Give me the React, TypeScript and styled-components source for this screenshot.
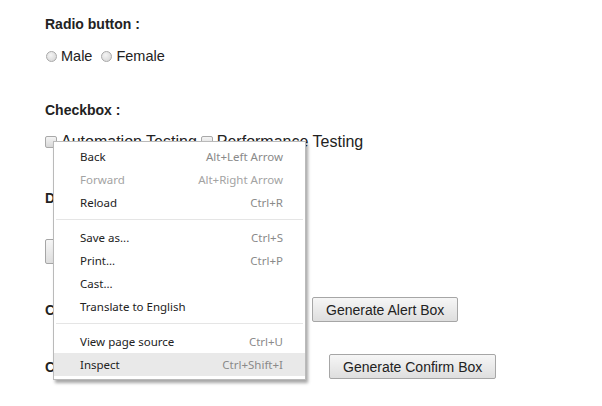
import React from "react";
import styled, { createGlobalStyle } from "styled-components";

const GlobalStyle = createGlobalStyle`
  html, body {
    margin: 0;
    padding: 0;
    background: #ffffff;
  }
  body {
    font-family: "Comic Sans MS", "Liberation Sans", Arial, sans-serif;
    color: #222;
  }
`;

type MenuItem = {
  label: string;
  shortcut?: string;
  disabled?: boolean;
  active?: boolean;
};

const menuGroups: MenuItem[][] = [
  [
    { label: "Back", shortcut: "Alt+Left Arrow" },
    { label: "Forward", shortcut: "Alt+Right Arrow", disabled: true },
    { label: "Reload", shortcut: "Ctrl+R" },
  ],
  [
    { label: "Save as...", shortcut: "Ctrl+S" },
    { label: "Print...", shortcut: "Ctrl+P" },
    { label: "Cast..." },
    { label: "Translate to English" },
  ],
  [
    { label: "View page source", shortcut: "Ctrl+U" },
    { label: "Inspect", shortcut: "Ctrl+Shift+I", active: true },
  ],
];

export default function App() {
  return (
    <>
      <GlobalStyle />
      <Page>
        <Section gap={13} after={35}>
          <Heading>Radio button :</Heading>
          <OptionRow spacing={8}>
            <OptionLabel size={14.5}>
              <Radio type="radio" name="gender" /> Male
            </OptionLabel>
            <OptionLabel size={14.5}>
              <Radio type="radio" name="gender" /> Female
            </OptionLabel>
          </OptionRow>
        </Section>

        <Section gap={13} after={37}>
          <Heading>Checkbox :</Heading>
          <OptionRow spacing={4}>
            <OptionLabel size={16}>
              <Check type="checkbox" /> Automation Testing
            </OptionLabel>
            <OptionLabel size={16}>
              <Check type="checkbox" /> Performance Testing
            </OptionLabel>
          </OptionRow>
        </Section>

        <Section gap={32} after={33}>
          <Heading>Double-click to generate alert box :</Heading>
          <ActionButton>Double-Click Me</ActionButton>
        </Section>

        <ActionRow after={32}>
          <Heading width={261}>Click to generate Alert Box :</Heading>
          <ActionButton>Generate Alert Box</ActionButton>
        </ActionRow>

        <ActionRow after={0}>
          <Heading width={278}>Click to generate Confirm Box :</Heading>
          <ActionButton>Generate Confirm Box</ActionButton>
        </ActionRow>

        <ContextMenu>
          {menuGroups.map((group, gi) => (
            <React.Fragment key={gi}>
              {gi > 0 && <Separator />}
              {group.map((item) => (
                <MenuRow key={item.label} active={item.active} disabled={item.disabled}>
                  <span>{item.label}</span>
                  <Shortcut disabled={item.disabled}>{item.shortcut}</Shortcut>
                </MenuRow>
              ))}
            </React.Fragment>
          ))}
        </ContextMenu>
      </Page>
    </>
  );
}

const Page = styled.div`
  position: relative;
  width: 602px;
  height: 406px;
  box-sizing: border-box;
  padding: 15px 0 0 45px;
  overflow: hidden;
`;

const Section = styled.div<{ gap: number; after: number }>`
  display: flex;
  flex-direction: column;
  align-items: flex-start;
  gap: ${(p) => p.gap}px;
  margin-bottom: ${(p) => p.after}px;
`;

const Heading = styled.div<{ width?: number }>`
  font-size: 14px;
  font-weight: bold;
  color: #222;
  line-height: 18px;
  white-space: nowrap;
  overflow: hidden;
  width: ${(p) => (p.width ? `${p.width}px` : "auto")};
  flex-shrink: 0;
`;

const OptionRow = styled.div<{ spacing: number }>`
  display: flex;
  align-items: center;
  gap: ${(p) => p.spacing}px;
  height: 20px;
`;

const OptionLabel = styled.label<{ size: number }>`
  display: flex;
  align-items: center;
  gap: 4px;
  font-size: ${(p) => p.size}px;
  color: #222;
  white-space: nowrap;
`;

const Radio = styled.input`
  appearance: none;
  width: 11px;
  height: 11px;
  margin: 0 0 0 1px;
  border-radius: 50%;
  border: 1px solid #a9a9a9;
  background: radial-gradient(circle at 40% 35%, #f4f4f4, #d2d2d2);
`;

const Check = styled.input`
  appearance: none;
  width: 12px;
  height: 12px;
  margin: 0;
  border-radius: 2px;
  border: 1px solid #a9a9a9;
  background: linear-gradient(#f4f4f4, #d8d8d8);
`;

const ActionRow = styled.div<{ after: number }>`
  display: flex;
  align-items: center;
  gap: 6px;
  margin-bottom: ${(p) => p.after}px;
`;

const ActionButton = styled.button`
  font-family: "Comic Sans MS", "Liberation Sans", Arial, sans-serif;
  font-size: 14px;
  color: #222;
  height: 25px;
  padding: 0 13px;
  border: 1px solid #a6a6a6;
  border-radius: 2px;
  background: linear-gradient(#f6f6f6, #dedede);
  white-space: nowrap;
`;

const ContextMenu = styled.div`
  position: absolute;
  left: 53px;
  top: 141px;
  width: 253px;
  box-sizing: border-box;
  padding: 3px 0;
  background: #ffffff;
  border: 1px solid #bababa;
  box-shadow: 2px 3px 3px rgba(0, 0, 0, 0.35);
  font-family: "Noto Sans", "Open Sans", sans-serif;
  font-size: 11.5px;
`;

const MenuRow = styled.div<{ active?: boolean; disabled?: boolean }>`
  display: flex;
  justify-content: space-between;
  align-items: center;
  height: 23px;
  padding: 0 22px 0 26px;
  background: ${(p) => (p.active ? "#e9e9e9" : "transparent")};
  color: ${(p) => (p.disabled ? "#a3a3a3" : "#222")};
`;

const Shortcut = styled.span<{ disabled?: boolean }>`
  color: ${(p) => (p.disabled ? "#a3a3a3" : "#8a8a8a")};
`;

const Separator = styled.div`
  height: 1px;
  margin: 5px 2px 6px;
  background: #e5e5e5;
`;
